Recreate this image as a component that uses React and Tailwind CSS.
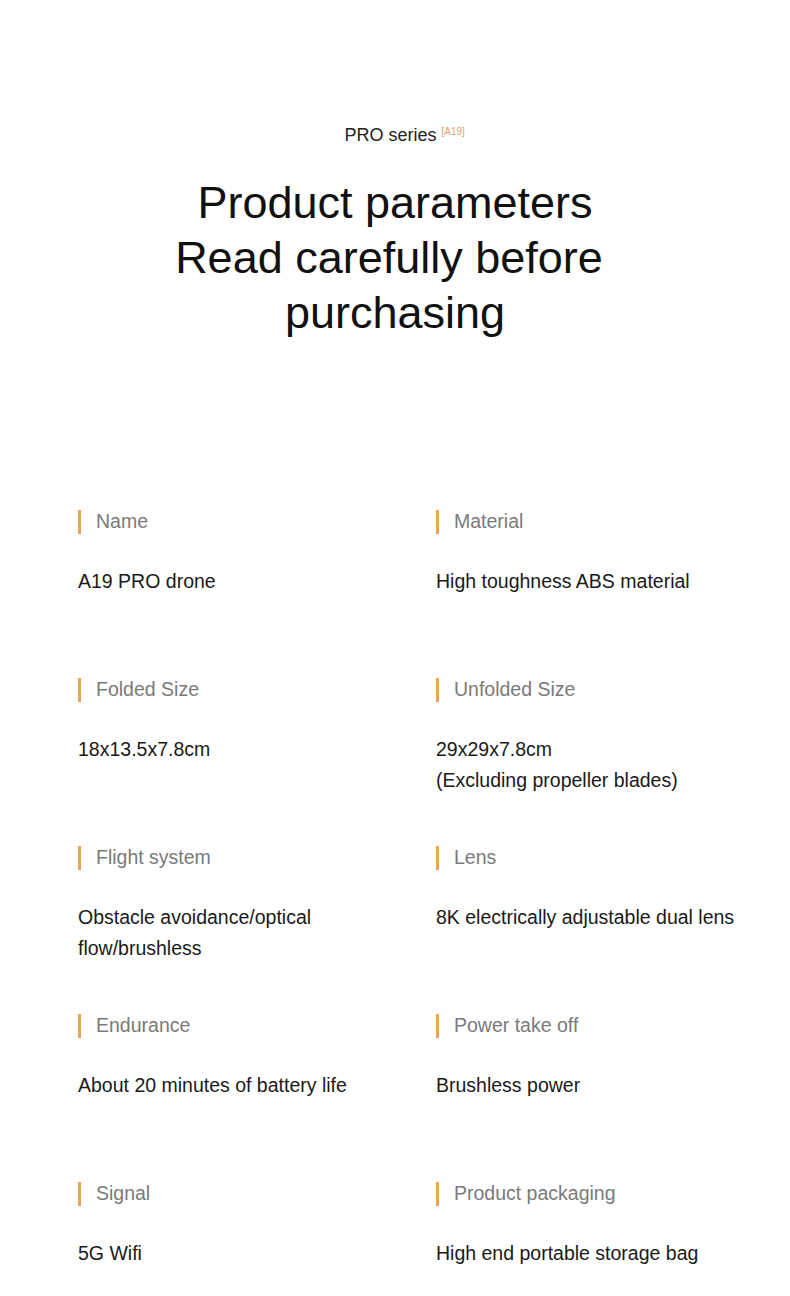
const params = [
  ["Name", "A19 PRO drone", "Material", "High toughness ABS material"],
  ["Folded Size", "18x13.5x7.8cm", "Unfolded Size", "29x29x7.8cm\n(Excluding propeller blades)"],
  ["Flight system", "Obstacle avoidance/optical\nflow/brushless", "Lens", "8K electrically adjustable dual lens"],
  ["Endurance", "About 20 minutes of battery life", "Power take off", "Brushless power"],
  ["Signal", "5G Wifi", "Product packaging", "High end portable storage bag"],
];

const Param = ({ label, value }) => (
  <div className="flex flex-col pt-[1px]">
    <div className="flex items-center h-[30px]">
      <span className="w-[3px] h-[24px] bg-[#e9a352]"></span>
      <span className="ml-[15px] text-[19.5px] text-[#7a7a7a]">{label}</span>
    </div>
    <p className="mt-[29px] text-[19.5px] leading-[31px] text-[#1a1a1a] whitespace-pre-line">{value}</p>
  </div>
);

export default function App() {
  return (
    <div className="w-[790px] min-h-[1296px] bg-white font-['Liberation_Sans',Arial,sans-serif]">
      <div className="pt-[123px] text-center">
        <p className="pr-[9px] text-[18px] leading-[24px] text-[#222]">
          <span className="relative">
            PRO series
            <span className="absolute left-full top-[0px] ml-[5px] text-[10px] leading-[14px] text-[#e0a070] whitespace-nowrap">[A19]</span>
          </span>
        </p>
        <h1 className="mt-[28px] text-[45px] leading-[55px] text-[#111]">
          <span className="block">Product parameters</span>
          <span className="block pr-[12px]">Read carefully before</span>
          <span className="block">purchasing</span>
        </h1>
      </div>

      <div className="mt-[166px] pl-[78px] grid grid-cols-[358px_1fr] auto-rows-[168px]">
        {params.map(([l1, v1, l2, v2]) => (
          <>
            <Param key={l1} label={l1} value={v1} />
            <Param key={l2} label={l2} value={v2} />
          </>
        ))}
      </div>
    </div>
  );
}
